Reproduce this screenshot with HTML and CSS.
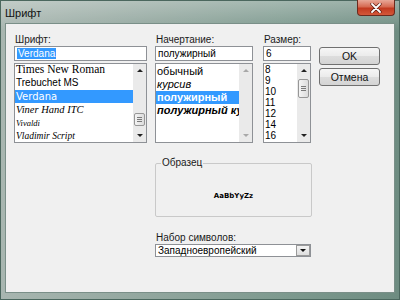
FILE: index.html
```html
<!DOCTYPE html>
<html lang="ru">
<head>
    <meta charset="UTF-8">
    <title>Шрифт</title>
    <link rel="stylesheet" href="styles.css">
</head>
<body>
    <div class="window">
        <div class="titlebar">
            <span class="title">Шрифт</span>
            <div class="close-btn">
                <svg viewBox="0 0 12 10" width="12" height="10">
                    <path d="M2 1 L10 9 M10 1 L2 9" stroke="#5a1a10" stroke-width="3.2" stroke-linecap="round"/>
                    <path d="M2 1 L10 9 M10 1 L2 9" stroke="#fff" stroke-width="1.8" stroke-linecap="round"/>
                </svg>
            </div>
        </div>

        <div class="client">
            <div class="top-row">
                <!-- font family -->
                <div class="col col-font">
                    <div class="label">Шрифт:</div>
                    <div class="field"><span class="text-sel">Verdana</span></div>
                    <div class="listbox">
                        <ul class="items items-font">
                            <li class="f-times">Times New Roman</li>
                            <li class="f-trebuchet">Trebuchet MS</li>
                            <li class="f-verdana selected">Verdana</li>
                            <li class="f-viner">Viner Hand ITC</li>
                            <li class="f-vivaldi">Vivaldi</li>
                            <li class="f-vladimir">Vladimir Script</li>
                        </ul>
                        <div class="scrollbar">
                            <span class="arrow arrow-up"></span>
                            <span class="track"><span class="thumb thumb-font"></span></span>
                            <span class="arrow arrow-down"></span>
                        </div>
                    </div>
                </div>

                <!-- style -->
                <div class="col col-style">
                    <div class="label">Начертание:</div>
                    <div class="field">полужирный</div>
                    <div class="listbox">
                        <ul class="items items-style">
                            <li>обычный</li>
                            <li class="s-italic">курсив</li>
                            <li class="s-bold selected">полужирный</li>
                            <li class="s-bold s-italic">полужирный курсив</li>
                        </ul>
                        <div class="scrollbar disabled">
                            <span class="arrow arrow-up"></span>
                            <span class="track"></span>
                            <span class="arrow arrow-down"></span>
                        </div>
                    </div>
                </div>

                <!-- size -->
                <div class="col col-size">
                    <div class="label">Размер:</div>
                    <div class="field">6</div>
                    <div class="listbox">
                        <ul class="items items-size">
                            <li>8</li>
                            <li>9</li>
                            <li>10</li>
                            <li>11</li>
                            <li>12</li>
                            <li>14</li>
                            <li>16</li>
                        </ul>
                        <div class="scrollbar">
                            <span class="arrow arrow-up"></span>
                            <span class="track"><span class="thumb thumb-size"></span></span>
                            <span class="arrow arrow-down"></span>
                        </div>
                    </div>
                </div>

                <div class="buttons">
                    <button class="btn">OK</button>
                    <button class="btn">Отмена</button>
                </div>
            </div>

            <div class="bottom">
                <fieldset class="sample-group">
                    <legend>Образец</legend>
                    <div class="sample">AaBbYyZz</div>
                </fieldset>

                <div class="label label-charset">Набор символов:</div>
                <div class="combo">
                    <span class="combo-text">Западноевропейский</span>
                    <span class="combo-btn"></span>
                </div>
            </div>
        </div>
    </div>
</body>
</html>
```

FILE: styles.css
```css
* {
    margin: 0;
    padding: 0;
    box-sizing: border-box;
}

body {
    font-family: 'Liberation Sans', Arial, sans-serif;
    font-size: 10px;
    color: #000;
    background-color: #6f8d82;
}

.window {
    width: 400px;
    height: 300px;
    display: flex;
    flex-direction: column;
    padding: 0 4px 6px 4px;
    border: 1px solid #4b675e;
    background:
        linear-gradient(180deg, rgba(255, 255, 255, 0.3) 0%, rgba(255, 255, 255, 0) 30px),
        linear-gradient(90deg, #a8b6b0 0%, #93a79f 35%, #7e9a8f 70%, #6e8c81 100%);
}

/* title bar */

.titlebar {
    height: 22px;
    display: flex;
    align-items: flex-start;
}

.title {
    font-size: 11px;
    line-height: 14px;
    margin-top: 5px;
    color: #111;
}

.close-btn {
    margin-left: auto;
    margin-top: -1px;
    width: 38px;
    height: 16px;
    border: 1px solid #6b2a1e;
    border-top: none;
    border-radius: 0 0 4px 4px;
    background: linear-gradient(180deg, #e8a898 0%, #d66a52 45%, #c23a20 55%, #d4583a 100%);
    display: flex;
    align-items: center;
    justify-content: center;
}

/* client area */

.client {
    flex: 1;
    background-color: #f0f0f0;
    border: 1px solid #7a8f88;
}

.top-row {
    display: flex;
    padding: 10px 0 0 8px;
}

.col-font {
    width: 133px;
    margin-right: 8px;
}

.col-style {
    width: 98px;
    margin-right: 10px;
}

.col-size {
    width: 48px;
    margin-right: 8px;
}

.label {
    height: 12px;
    line-height: 12px;
    padding-left: 1px;
    color: #1a1a1a;
}

.field {
    height: 15px;
    line-height: 13px;
    padding-left: 2px;
    background-color: #fff;
    border: 1px solid #8e9196;
    white-space: nowrap;
    overflow: hidden;
}

.text-sel {
    background-color: #3399ff;
    color: #fff;
    padding: 0 1px;
}

.listbox {
    margin-top: 2px;
    height: 80px;
    display: flex;
    background-color: #fff;
    border: 1px solid #8e9196;
    overflow: hidden;
}

.items {
    flex: 1;
    list-style: none;
    overflow: hidden;
    white-space: nowrap;
}

.items li {
    padding-left: 1px;
}

.items .selected {
    background-color: #3399ff;
    color: #fff;
}

.items-font li {
    height: 13.4px;
    line-height: 13.4px;
    overflow: hidden;
}

.items-font {
    margin-top: -1px;
}

.f-times {
    font-family: 'Liberation Serif', 'Times New Roman', serif;
    font-size: 11.5px;
}

.f-trebuchet {
    font-family: 'Liberation Sans', sans-serif;
    font-size: 10px;
}

.f-verdana {
    font-family: 'DejaVu Sans', Verdana, sans-serif;
    font-size: 10px;
}

.f-viner {
    font-family: 'Liberation Serif', serif;
    font-style: italic;
    font-size: 10.5px;
}

.f-vivaldi {
    font-family: 'Liberation Serif', serif;
    font-style: italic;
    font-size: 8.5px;
}

.f-vladimir {
    font-family: 'Liberation Serif', serif;
    font-style: italic;
    font-size: 9.5px;
}

.items-style {
    font-size: 11px;
    padding-top: 1px;
}

.items-style li {
    height: 13px;
    line-height: 13px;
    overflow: hidden;
}

.s-italic {
    font-style: italic;
}

.s-bold {
    font-weight: bold;
}

.items-size {
    font-size: 10px;
}

.items-size li {
    height: 11px;
    line-height: 11px;
    overflow: hidden;
}

/* scrollbars */

.scrollbar {
    width: 13px;
    display: flex;
    flex-direction: column;
    background-color: #eaeaea;
}

.arrow {
    height: 13px;
    display: flex;
    align-items: center;
    justify-content: center;
}

.arrow::after {
    content: '';
    border-left: 3px solid transparent;
    border-right: 3px solid transparent;
}

.arrow-up::after {
    border-bottom: 3px solid #222;
}

.arrow-down::after {
    border-top: 3px solid #222;
}

.disabled .arrow-up::after {
    border-bottom-color: #a8a8a8;
}

.disabled .arrow-down::after {
    border-top-color: #a8a8a8;
}

.track {
    flex: 1;
    display: flex;
    flex-direction: column;
    align-items: center;
}

.thumb {
    width: 11px;
    border: 1px solid #979797;
    border-radius: 2px;
    background:
        linear-gradient(180deg, transparent 0, transparent 3px, #7a7a7a 3px, #7a7a7a 4px, transparent 4px, transparent 5px, #7a7a7a 5px, #7a7a7a 6px, transparent 6px, transparent 7px, #7a7a7a 7px, #7a7a7a 8px, transparent 8px) center / 5px 100% no-repeat,
        linear-gradient(90deg, #f4f4f4, #dcdcdc);
}

.thumb-font {
    height: 13px;
    margin-top: 36px;
}

.thumb-size {
    height: 19px;
    margin-top: 2px;
    background:
        linear-gradient(180deg, transparent 0, transparent 6px, #7a7a7a 6px, #7a7a7a 7px, transparent 7px, transparent 8px, #7a7a7a 8px, #7a7a7a 9px, transparent 9px, transparent 10px, #7a7a7a 10px, #7a7a7a 11px, transparent 11px) center / 5px 100% no-repeat,
        linear-gradient(90deg, #f4f4f4, #dcdcdc);
}

/* buttons */

.buttons {
    width: 61px;
    margin-top: 13px;
    display: flex;
    flex-direction: column;
    gap: 3px;
}

.btn {
    height: 18px;
    font-family: 'Liberation Sans', Arial, sans-serif;
    font-size: 10.5px;
    color: #111;
    border: 1px solid #707070;
    border-radius: 3px;
    background: linear-gradient(180deg, #f6f6f6 0%, #ebebeb 50%, #dddddd 51%, #d4d4d4 100%);
}

/* bottom part */

.bottom {
    margin-left: 149px;
    width: 157px;
}

.sample-group {
    margin-top: 14px;
    border: 1px solid #c9c9c9;
    border-radius: 2px;
    min-inline-size: 0;
}

.sample-group legend {
    margin-left: 5px;
    padding: 0 1px;
    height: 12px;
    line-height: 12px;
    color: #1a1a1a;
}

.sample {
    height: 47px;
    padding-top: 7px;
    display: flex;
    align-items: center;
    justify-content: center;
    font-family: 'DejaVu Sans', Verdana, sans-serif;
    font-size: 7px;
    font-weight: bold;
}

.label-charset {
    margin-top: 15px;
}

.combo {
    width: 156px;
    height: 13px;
    display: flex;
    background-color: #fff;
    border: 1px solid #8e9196;
}

.combo-text {
    flex: 1;
    line-height: 11px;
    padding-left: 2px;
}

.combo-btn {
    width: 14px;
    border: 1px solid #9a9a9a;
    background: linear-gradient(180deg, #f4f4f4, #dedede);
    display: flex;
    align-items: center;
    justify-content: center;
}

.combo-btn::after {
    content: '';
    border-left: 3px solid transparent;
    border-right: 3px solid transparent;
    border-top: 3px solid #111;
}
```
